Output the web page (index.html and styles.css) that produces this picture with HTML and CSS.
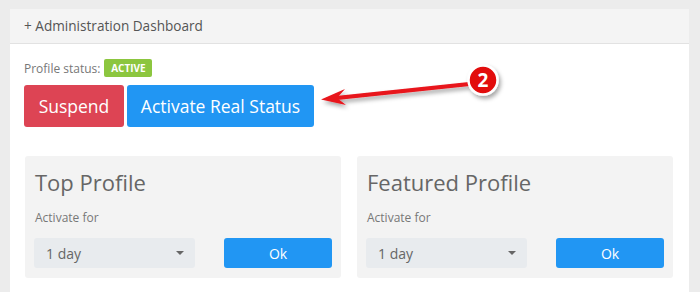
FILE: index.html
```html
<!DOCTYPE html>
<html>
<head>
<meta charset="utf-8">
<link rel="stylesheet" href="styles.css">
</head>
<body>
<div class="panel">
  <div class="panel-head">+ Administration Dashboard</div>
  <div class="panel-body">
    <div class="status">Profile status: <span class="badge">ACTIVE</span></div>
    <div class="actions">
      <button class="btn btn-red">Suspend</button>
      <button class="btn btn-blue">Activate Real Status</button>
    </div>
    <div class="cards">
      <div class="card">
        <div class="card-title">Top Profile</div>
        <div class="card-label">Activate for</div>
        <div class="card-row">
          <div class="select"><span>1 day</span><span class="caret"></span></div>
          <button class="btn-ok">Ok</button>
        </div>
      </div>
      <div class="card">
        <div class="card-title">Featured Profile</div>
        <div class="card-label">Activate for</div>
        <div class="card-row">
          <div class="select"><span>1 day</span><span class="caret"></span></div>
          <button class="btn-ok">Ok</button>
        </div>
      </div>
    </div>
  </div>
</div>
<svg class="callout" width="700" height="292" viewBox="0 0 700 292">
  <defs>
    <filter id="sh" x="-20%" y="-50%" width="140%" height="200%">
      <feDropShadow dx="2" dy="3" stdDeviation="2" flood-color="#000" flood-opacity="0.35"/>
    </filter>
  </defs>
  <g filter="url(#sh)">
    <polygon points="469,82 470,86 337,100 336,96" fill="#e8141b"/>
    <polygon points="321,99.5 345,89 337,98 346,105" fill="#e8141b"/>
    <circle cx="483" cy="80" r="14.5" fill="#e20a0a" stroke="#fff" stroke-width="2.5"/>
  </g>
  <text x="483" y="87" text-anchor="middle" class="num">2</text>
</svg>
</body>
</html>
```
FILE: styles.css
```css
* { box-sizing: border-box; }
html, body { margin: 0; }
body {
  width: 700px;
  height: 292px;
  overflow: hidden;
  background: #ececec;
  padding: 9px 11px 0 10px;
  font-family: "Open Sans", "Liberation Sans", sans-serif;
  position: relative;
}
.panel {
  background: #fff;
  height: 290px;
}
.panel-head {
  height: 35px;
  background: #f4f4f4;
  border-bottom: 1px solid #e2e2e2;
  padding: 7px 0 0 14px;
  font-size: 13.6px;
  color: #555;
}
.panel-body {
  padding: 15px 16px 0 14px;
}
.status {
  display: flex;
  align-items: center;
  height: 18px;
  font-size: 12px;
  color: #777;
}
.badge {
  display: inline-flex;
  align-items: center;
  justify-content: center;
  margin-left: 4px;
  width: 48px;
  height: 18px;
  background: #8cc63f;
  color: #fff;
  font-size: 10px;
  font-weight: 700;
  border-radius: 2px;
}
.actions {
  display: flex;
  gap: 3px;
  margin-top: 8px;
}
.btn {
  height: 42px;
  border: 0;
  border-radius: 3px;
  color: #fff;
  font-family: inherit;
  font-size: 17.5px;
  padding: 0;
}
.btn-red { background: #dd4454; width: 100px; }
.btn-blue { background: #2196f3; width: 187px; }
.cards {
  display: flex;
  gap: 16px;
  margin-top: 29px;
  padding-left: 1px;
}
.card {
  width: 316px;
  height: 122px;
  background: #f3f3f3;
  border-radius: 3px;
  padding: 11px 9px 0 9px;
}
.card-title {
  font-size: 22px;
  color: #666;
  line-height: 30px;
  padding-left: 1px;
}
.card-label {
  margin-top: 13px;
  font-size: 12px;
  color: #777;
  line-height: 16px;
  padding-left: 1px;
}
.card-row {
  display: flex;
  justify-content: space-between;
  margin-top: 12px;
}
.select {
  width: 161px;
  height: 30px;
  background: #e8ebee;
  border-radius: 3px;
  display: flex;
  align-items: center;
  justify-content: space-between;
  padding: 0 11px 0 12px;
  font-size: 14px;
  color: #666;
}
.caret {
  width: 0;
  height: 0;
  border-left: 4px solid transparent;
  border-right: 4px solid transparent;
  border-top: 4px solid #666;
}
.btn-ok {
  width: 108px;
  height: 30px;
  border: 0;
  border-radius: 3px;
  background: #2196f3;
  color: #fff;
  font-family: inherit;
  font-size: 14px;
  padding: 0;
}
.callout {
  position: absolute;
  left: 0;
  top: 0;
}
.num {
  font-family: "Open Sans", "Liberation Sans", sans-serif;
  font-size: 19px;
  font-weight: 700;
  fill: #fff;
}
```
